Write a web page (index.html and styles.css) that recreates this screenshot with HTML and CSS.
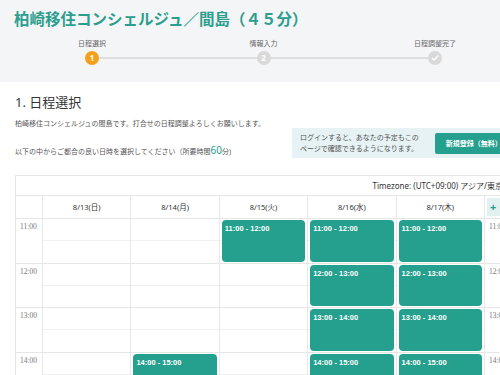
FILE: index.html
```html
<!DOCTYPE html>
<html lang="ja">
<head>
    <meta charset="UTF-8">
    <meta name="viewport" content="width=device-width, initial-scale=1.0">
    <title>日程選択</title>
    <link rel="stylesheet" href="styles.css">
</head>
<body>
    <div class="top">
        <h1 class="title">柏崎移住コンシェルジュ／間島（４５分）</h1>
        <div class="steps">
            <div class="step">
                <span class="step-label">日程選択</span>
                <span class="dot dot-active">1</span>
            </div>
            <div class="step">
                <span class="step-label">情報入力</span>
                <span class="dot">2</span>
            </div>
            <div class="step">
                <span class="step-label">日程調整完了</span>
                <span class="dot">
                    <svg width="8" height="8" viewBox="0 0 10 10"><polyline points="1.5,5.2 4,7.6 8.6,2.6" fill="none" stroke="#fff" stroke-width="1.8" stroke-linecap="round" stroke-linejoin="round"/></svg>
                </span>
            </div>
        </div>
    </div>

    <div class="content">
        <h2 class="section-title">1. 日程選択</h2>
        <div class="intro">
            <div class="intro-text">
                <p>柏崎移住コンシェルジュの間島です。打合せの日程調整よろしくお願いします。</p>
                <p>以下の中からご都合の良い日時を選択してください（所要時間<span class="minutes">60</span>分)</p>
            </div>
            <div class="login-box">
                <p class="login-text">ログインすると、あなたの予定もこの<br>ページで確認できるようになります。</p>
                <span class="signup">新規登録（無料）</span>
            </div>
        </div>

        <div class="calendar">
            <div class="tz">Timezone: (UTC+09:00) アジア/東京</div>
            <div class="cal-row cal-head">
                <div class="cell"></div>
                <div class="cell day">8/13(日)</div>
                <div class="cell day">8/14(月)</div>
                <div class="cell day">8/15(火)</div>
                <div class="cell day">8/16(水)</div>
                <div class="cell day">8/17(木)</div>
                <div class="cell"><span class="next">+</span></div>
            </div>
            <div class="cal-row hour">
                <div class="cell time">11:00</div>
                <div class="cell slot"></div>
                <div class="cell slot"></div>
                <div class="cell slot"><div class="event">11:00 - 12:00</div></div>
                <div class="cell slot"><div class="event">11:00 - 12:00</div></div>
                <div class="cell slot"><div class="event">11:00 - 12:00</div></div>
                <div class="cell time">11:00</div>
            </div>
            <div class="cal-row hour">
                <div class="cell time">12:00</div>
                <div class="cell slot"></div>
                <div class="cell slot"></div>
                <div class="cell slot"></div>
                <div class="cell slot"><div class="event">12:00 - 13:00</div></div>
                <div class="cell slot"><div class="event">12:00 - 13:00</div></div>
                <div class="cell time">12:00</div>
            </div>
            <div class="cal-row hour">
                <div class="cell time">13:00</div>
                <div class="cell slot"></div>
                <div class="cell slot"></div>
                <div class="cell slot"></div>
                <div class="cell slot"><div class="event">13:00 - 14:00</div></div>
                <div class="cell slot"><div class="event">13:00 - 14:00</div></div>
                <div class="cell time">13:00</div>
            </div>
            <div class="cal-row hour">
                <div class="cell time">14:00</div>
                <div class="cell slot"></div>
                <div class="cell slot"><div class="event">14:00 - 15:00</div></div>
                <div class="cell slot"></div>
                <div class="cell slot"><div class="event">14:00 - 15:00</div></div>
                <div class="cell slot"><div class="event">14:00 - 15:00</div></div>
                <div class="cell time">14:00</div>
            </div>
        </div>
    </div>
</body>
</html>
```

FILE: styles.css
```css
* {
    box-sizing: border-box;
}
html, body {
    margin: 0;
}
body {
    width: 500px;
    height: 375px;
    overflow: hidden;
    background: #fff;
    color: #333;
    font-family: "Noto Sans", "Noto Sans CJK JP", sans-serif;
}

/* header + stepper */
.top {
    height: 82px;
    padding: 9px 14px 0;
    background: #f4f5f7;
}
.title {
    margin: 0;
    font-size: 15.5px;
    line-height: 20px;
    font-weight: bold;
    color: #2c9e8e;
    white-space: nowrap;
}
.steps {
    position: relative;
    display: flex;
    justify-content: space-between;
    width: 403px;
    margin: 10px 0 0 48px;
}
.steps::before {
    content: "";
    position: absolute;
    left: 30px;
    right: 30px;
    top: 18px;
    height: 2px;
    background: #dedede;
}
.step {
    position: relative;
    width: 60px;
    display: flex;
    flex-direction: column;
    align-items: center;
}
.step-label {
    font-size: 7px;
    line-height: 10px;
    color: #666;
    white-space: nowrap;
}
.dot {
    width: 14px;
    height: 14px;
    margin-top: 2px;
    border-radius: 50%;
    background: #d9d9d9;
    color: #fff;
    font-size: 8px;
    font-weight: bold;
    line-height: 14px;
    text-align: center;
    display: flex;
    align-items: center;
    justify-content: center;
}
.dot-active {
    background: #f5a01a;
}

/* content */
.content {
    padding: 11px 15px 0;
}
.section-title {
    margin: 0;
    font-size: 13px;
    line-height: 18px;
    font-weight: normal;
    color: #333;
}
.intro {
    display: flex;
    justify-content: space-between;
    margin-top: 8px;
}
.intro-text p {
    margin: 0;
    font-size: 7px;
    line-height: 10px;
    color: #555;
    white-space: nowrap;
}
.intro-text p + p {
    margin-top: 16px;
}
.minutes {
    font-size: 10px;
    line-height: 10px;
    color: #2a9d8c;
}
.login-box {
    display: flex;
    align-items: center;
    width: 213px;
    height: 30px;
    margin: 9px -20px 0 0;
    padding-left: 8px;
    background: #e6f2f4;
}
.login-text {
    margin: 0;
    font-size: 7px;
    line-height: 11px;
    color: #555;
    white-space: nowrap;
}
.signup {
    margin-left: 16px;
    height: 21px;
    padding: 0 11px;
    border-radius: 2px;
    background: #26a08e;
    color: #fff;
    font-size: 7px;
    font-weight: bold;
    line-height: 21px;
    white-space: nowrap;
}

/* calendar */
.calendar {
    width: 500px;
    margin-top: 17px;
    border: 1px solid #e6e6e6;
}
.tz {
    height: 20px;
    padding-right: 11px;
    border-bottom: 1px solid #e6e6e6;
    font-size: 8px;
    line-height: 19px;
    text-align: right;
    color: #333;
    white-space: nowrap;
}
.cal-row {
    display: grid;
    grid-template-columns: 26px repeat(5, 88.4px) 30px;
    border-bottom: 1px solid #e6e6e6;
}
.cell + .cell {
    border-left: 1px solid #e8e8e8;
}
.cal-head {
    height: 23px;
}
.day {
    font-size: 7.5px;
    line-height: 22px;
    text-align: center;
    color: #333;
}
.next {
    display: block;
    margin: 2px 0 2px 2px;
    height: 18px;
    padding-left: 3px;
    background: #e0f1ef;
    color: #26a08e;
    font-size: 11px;
    font-weight: bold;
    line-height: 18px;
}
.hour {
    height: 44.6px;
}
.time {
    padding: 3px 0 0 4px;
    font-family: "Liberation Serif", serif;
    font-size: 7.5px;
    color: #777;
}
.slot {
    background: linear-gradient(#f0f0f0, #f0f0f0) 0 50% / 100% 1px no-repeat;
}
.event {
    height: calc(100% - 2px);
    margin: 1px 2px;
    padding: 4px 3px;
    border-radius: 4px;
    background: #26a08e;
    color: #fff;
    font-family: "Liberation Sans", Arial, sans-serif;
    font-size: 7.5px;
    font-weight: bold;
}
```
